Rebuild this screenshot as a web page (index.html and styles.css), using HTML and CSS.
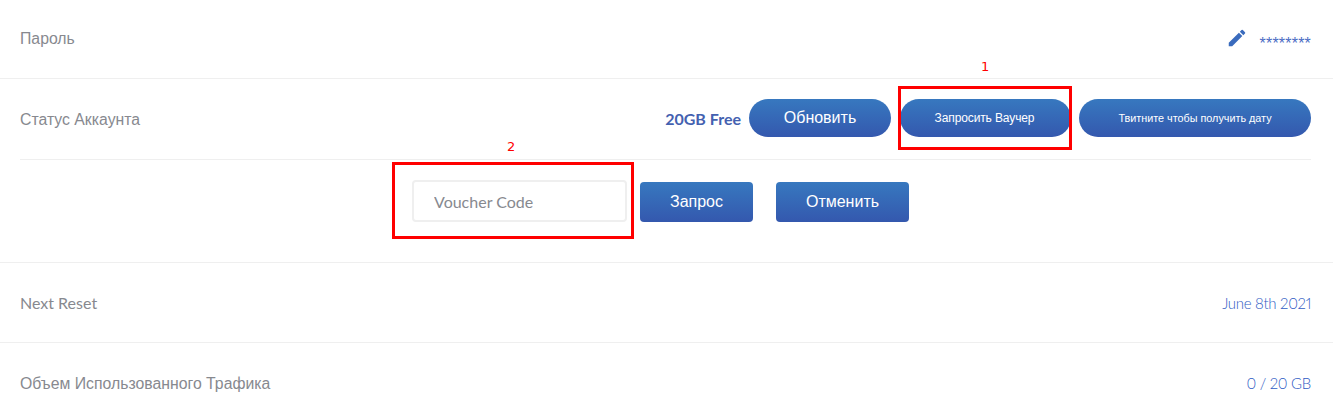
FILE: index.html
```html
<!DOCTYPE html>
<html lang="ru">
<head>
<meta charset="utf-8">
<title>Аккаунт</title>
<link rel="stylesheet" href="styles.css">
</head>
<body>
<div class="row row-password">
  <span class="label cyr">Пароль</span>
  <div class="right">
    <svg class="edit" viewBox="0 0 24 24" width="24" height="24"><path d="M3 17.25V21h3.75L17.81 9.94l-3.75-3.75L3 17.25zM20.71 7.04a1 1 0 0 0 0-1.41l-2.34-2.34a1 1 0 0 0-1.41 0l-1.83 1.83 3.75 3.75 1.83-1.83z"/></svg>
    <span class="stars">********</span>
  </div>
</div>
<div class="row-group">
  <div class="row row-status">
    <span class="label cyr cyr-status">Статус Аккаунта</span>
    <div class="right actions">
      <strong class="plan">20GB Free</strong>
      <button class="btn pill pill-update">Обновить</button>
      <button class="btn pill pill-voucher">Запросить Ваучер</button>
      <button class="btn pill pill-tweet">Твитните чтобы получить дату</button>
    </div>
  </div>
  <div class="voucher">
    <input class="code" type="text" placeholder="Voucher Code">
    <button class="btn square square-send">Запрос</button>
    <button class="btn square square-cancel">Отменить</button>
  </div>
</div>
<div class="row row-reset">
  <span class="label">Next Reset</span>
  <span class="value">June 8th 2021</span>
</div>
<div class="row row-usage">
  <span class="label cyr">Объем Использованного Трафика</span>
  <span class="value">0 / 20 GB</span>
</div>
<div class="mark mark-one"></div>
<span class="num num-one">1</span>
<div class="mark mark-two"></div>
<span class="num num-two">2</span>
</body>
</html>
```
FILE: styles.css
```css
* { box-sizing: border-box; }
html, body { margin: 0; height: 417px; overflow: hidden; background: #fff; }
body { position: relative; font-family: Lato, "Liberation Sans", sans-serif; font-size: 16px; color: #87898f; }
.cyr { font-family: "Liberation Sans", sans-serif; font-size: 15.8px; padding-top: 2px; }
.cyr-status { padding-top: 4px; }
.row { display: flex; justify-content: space-between; align-items: center; padding: 0 22px 0 20px; }
.row-password { height: 79px; border-bottom: 1px solid #efefef; padding-bottom: 2px; }
.row-group { height: 184px; border-bottom: 1px solid #efefef; }
.row-status { height: 81px; margin: 0 22px 0 20px; padding: 0 0 2px; border-bottom: 1px solid #efefef; }
.row-reset { height: 80px; border-bottom: 1px solid #efefef; }
.row-usage { height: 80px; }
.right { display: flex; align-items: center; }
.edit { fill: #3a6bbd; margin-right: 12px; width: 22px; height: 22px; }
.stars { color: #4a6cc4; font: 300 16px "Liberation Sans", sans-serif; letter-spacing: 0.2px; line-height: 1; padding-top: 12px; }
.actions { gap: 8px; }
.plan { color: #4461b0; font-weight: 700; }
.btn { border: 0; color: #fff; background: linear-gradient(#3778bf, #3458ae); font-family: "Liberation Sans", sans-serif; padding: 0; }
.pill { height: 38px; border-radius: 19px; }
.pill-update { width: 142px; font-size: 16px; margin-right: 1px; }
.pill-voucher { width: 171px; font-size: 12px; letter-spacing: -0.12px; padding-right: 2px; }
.pill-tweet { width: 232px; font-size: 10.8px; }
.voucher { display: flex; align-items: flex-end; padding: 20px 0 0 412px; }
.code { width: 215px; height: 42px; border: 2px solid #efefef; border-radius: 4px; padding: 0 20px; font: 16px Lato, sans-serif; color: #87898f; margin-right: 13px; outline: 0; }
.code::placeholder { color: #87898f; opacity: 1; }
.square { height: 40px; border-radius: 4px; font-size: 16px; }
.square-send { width: 113px; margin-right: 23px; }
.square-cancel { width: 133px; }
.value { color: #2f5cc4; font-size: 15px; letter-spacing: -0.3px; font-weight: 300; font-variant-numeric: proportional-nums; }
.mark { position: absolute; border: 3px solid #f00; }
.mark-one { left: 898px; top: 86px; width: 174px; height: 64px; }
.mark-two { left: 392px; top: 162px; width: 242px; height: 77px; }
.num { position: absolute; color: #f00; font: 13px "DejaVu Sans", sans-serif; }
.num-one { left: 981px; top: 59px; }
.num-two { left: 507px; top: 139px; }
```
